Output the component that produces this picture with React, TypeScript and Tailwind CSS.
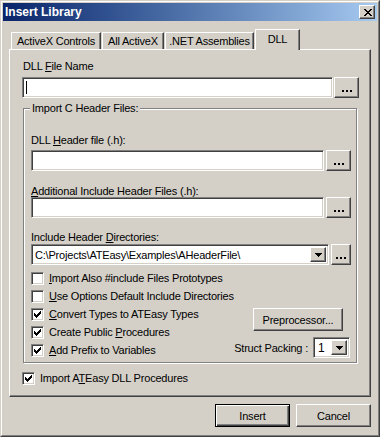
const RAISED =
  "border border-t-white border-l-white border-r-[#404040] border-b-[#404040] shadow-[inset_-1px_-1px_0_#808080] bg-[#d4d0c8]";
const SUNKEN =
  "border border-t-[#808080] border-l-[#808080] border-r-white border-b-white shadow-[inset_1px_1px_0_#404040,inset_-1px_-1px_0_#d4d0c8] bg-white";

function Dots() {
  return (
    <span className="flex gap-[2px]">
      <i className="block h-[2px] w-[2px] bg-black" />
      <i className="block h-[2px] w-[2px] bg-black" />
      <i className="block h-[2px] w-[2px] bg-black" />
    </span>
  );
}

function Browse({ wide }: { wide?: boolean }) {
  return (
    <div
      className={`${RAISED} flex h-[21px] shrink-0 items-end justify-center pb-[5px] ${
        wide ? "w-[25px]" : "w-[20px]"
      }`}
    >
      <Dots />
    </div>
  );
}

function Arrow() {
  return (
    <svg width="7" height="4" viewBox="0 0 7 4" shapeRendering="crispEdges">
      <path d="M0 0h7v1H0z M1 1h5v1H1z M2 2h3v1H2z M3 3h1v1H3z" fill="#000" />
    </svg>
  );
}

function DropButton() {
  return (
    <div className={`${RAISED} flex w-[16px] shrink-0 items-center justify-center`}>
      <Arrow />
    </div>
  );
}

function Box({ checked }: { checked?: boolean }) {
  return (
    <div className={`${SUNKEN} flex h-[13px] w-[13px] shrink-0 items-center justify-center`}>
      {checked && (
        <svg width="7" height="7" viewBox="0 0 7 7" shapeRendering="crispEdges">
          <path
            d="M0 2h1v3H0z M1 3h1v3H1z M2 4h1v3H2z M3 3h1v3H3z M4 2h1v3H4z M5 1h1v3H5z M6 0h1v3H6z"
            fill="#000"
          />
        </svg>
      )}
    </div>
  );
}

function CheckRow({ checked, children }: { checked?: boolean; children: React.ReactNode }) {
  return (
    <div className="flex h-[18px] items-center gap-[5px]">
      <Box checked={checked} />
      <span className="whitespace-nowrap">{children}</span>
    </div>
  );
}

function Tab({ label, w, active }: { label: string; w: string; active?: boolean }) {
  return (
    <div
      className={`${w} flex items-center justify-center border border-b-0 border-t-white border-l-white border-r-[#404040] bg-[#d4d0c8] shadow-[inset_-1px_0_0_#808080] ${
        active ? "relative z-10 -mb-px h-[21px] pb-[2px]" : "h-[17px]"
      }`}
    >
      {label}
    </div>
  );
}

export default function App() {
  return (
    <div className="h-[437px] w-[380px] border border-t-[#d4d0c8] border-l-[#d4d0c8] border-r-[#404040] border-b-[#404040] bg-[#d4d0c8] font-['Liberation_Sans',Arial,sans-serif] text-[11px] leading-[12px] tracking-[-0.2px] text-black">
      <div className="flex h-full flex-col border border-t-white border-l-white border-r-[#808080] border-b-[#808080] p-px">
        {/* title bar */}
        <div className="flex h-[18px] items-center justify-between bg-gradient-to-r from-[#0a246a] to-[#a6caf0] pl-[2px] pr-[2px]">
          <span className="text-[12px] font-bold tracking-normal text-white">Insert Library</span>
          <div className={`${RAISED} flex h-[14px] w-[16px] items-center justify-center pl-px`}>
            <svg width="8" height="7" viewBox="0 0 8 7" shapeRendering="crispEdges">
              <path
                d="M0 0h2v1H0z M6 0h2v1H6z M1 1h2v1H1z M5 1h2v1H5z M2 2h4v1H2z M3 3h2v1H3z M2 4h4v1H2z M1 5h2v1H1z M5 5h2v1H5z M0 6h2v1H0z M6 6h2v1H6z"
                fill="#000"
              />
            </svg>
          </div>
        </div>

        <div className="mx-[6px] mt-[8px]">
          <div className="flex h-[20px] items-end gap-px pl-[2px]">
            <Tab label="ActiveX Controls" w="w-[90px]" />
            <Tab label="All ActiveX" w="w-[62px]" />
            <Tab label=".NET Assemblies" w="w-[89px]" />
            <Tab label="DLL" w="w-[45px]" active />
          </div>

          <div className="h-[348px] border border-t-white border-l-white border-r-[#404040] border-b-[#404040] pl-[12px] pr-[11px] pt-[10px] shadow-[inset_-1px_-1px_0_#808080]">
            <div className="mb-[5px] pl-px">
              DLL <u>F</u>ile Name
            </div>
            <div className="flex gap-px">
              <div className={`${SUNKEN} h-[21px] flex-1 pl-[3px] pt-[3px]`}>
                <i className="block h-[13px] w-px bg-black" />
              </div>
              <Browse wide />
            </div>

            <div className="relative mx-px mt-[10px] mr-[2px] border border-[#808080] pb-[3px] pl-[7px] pr-[5px] pt-[25px] shadow-[inset_1px_1px_0_white,1px_1px_0_white]">
              <span className="absolute -top-[7px] left-[6px] bg-[#d4d0c8] px-[2px]">Import C Header Files:</span>

              <div className="mb-[4px]">
                DLL <u>H</u>eader file (.h):
              </div>
              <div className="flex gap-[2px]">
                <div className={`${SUNKEN} h-[21px] flex-1`} />
                <Browse wide />
              </div>

              <div className="mt-[14px]">
                <u>A</u>dditional Include Header Files (.h):
              </div>
              <div className="flex gap-[2px]">
                <div className={`${SUNKEN} h-[21px] flex-1`} />
                <Browse wide />
              </div>

              <div className="mb-px mt-[13px]">
                Include Header <u>D</u>irectories:
              </div>
              <div className="flex gap-[2px]">
                <div className={`${SUNKEN} flex h-[21px] flex-1 items-stretch p-[2px]`}>
                  <span className="flex flex-1 items-center pl-px">C:\Projects\ATEasy\Examples\AHeaderFile\</span>
                  <DropButton />
                </div>
                <Browse />
              </div>

              <div className="mt-[4px] flex">
                <div className="flex flex-col">
                  <CheckRow>
                    <u>I</u>mport Also #include Files Prototypes
                  </CheckRow>
                  <CheckRow>
                    <u>U</u>se Options Default Include Directories
                  </CheckRow>
                  <CheckRow checked>
                    <u>C</u>onvert Types to ATEasy Types
                  </CheckRow>
                  <CheckRow checked>
                    Create Public <u>P</u>rocedures
                  </CheckRow>
                  <CheckRow checked>
                    <u>A</u>dd Prefix to Variables
                  </CheckRow>
                </div>
                <div className="flex flex-1 flex-col items-end">
                  <div className={`${RAISED} mr-[8px] mt-[39px] flex h-[23px] w-[90px] items-center justify-center`}>
                    Preprocessor...
                  </div>
                  <div className="mr-px mt-[6px] flex items-center gap-[5px]">
                    <span className="whitespace-nowrap">Struct Packing :</span>
                    <div className={`${SUNKEN} flex h-[21px] w-[37px] items-stretch p-[2px]`}>
                      <span className="flex flex-1 items-center pl-[2px] text-[12px]">1</span>
                      <DropButton />
                    </div>
                  </div>
                </div>
              </div>
            </div>

            <div className="mt-[6px] flex h-[18px] items-center gap-[5px]">
              <Box checked />
              <span>
                Import A<u>T</u>Easy DLL Procedures
              </span>
            </div>
          </div>
        </div>

        <div className="mx-[6px] mt-[7px] flex justify-end gap-[6px]">
          <div className="flex h-[23px] w-[75px] items-center justify-center border border-black shadow-[inset_1px_1px_0_white,inset_-1px_-1px_0_#404040,inset_-2px_-2px_0_#808080]">
            Insert
          </div>
          <div className={`${RAISED} flex h-[23px] w-[75px] items-center justify-center`}>Cancel</div>
        </div>
      </div>
    </div>
  );
}
